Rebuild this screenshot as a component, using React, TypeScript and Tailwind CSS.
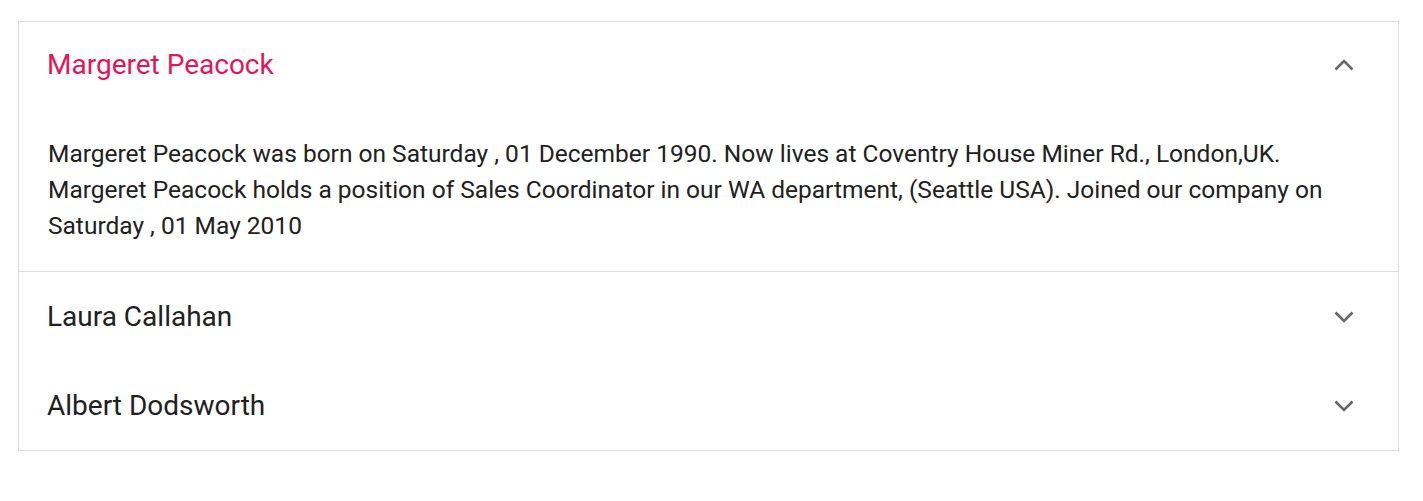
import { useState } from "react";

type Person = { name: string; about: string };

const people: Person[] = [
  {
    name: "Margeret Peacock",
    about:
      "Margeret Peacock was born on Saturday , 01 December 1990. Now lives at Coventry House Miner Rd., London,UK. Margeret Peacock holds a position of Sales Coordinator in our WA department, (Seattle USA). Joined our company on Saturday , 01 May 2010",
  },
  {
    name: "Laura Callahan",
    about:
      "Laura Callahan was born on Tuesday , 06 January 1987. Now lives at 4726 - 11th Ave. N.E., Seattle,USA.",
  },
  {
    name: "Albert Dodsworth",
    about:
      "Albert Dodsworth was born on Monday , 19 July 1982. Now lives at 7 Houndstooth Rd., London,UK.",
  },
];

function Chevron({ up }: { up: boolean }) {
  return (
    <svg width="20" height="12" viewBox="0 0 20 12" fill="none" className="text-[#666666]">
      <polyline
        points={up ? "1.5,10.5 10,2 18.5,10.5" : "1.5,1.5 10,10 18.5,1.5"}
        stroke="currentColor"
        strokeWidth="2.5"
      />
    </svg>
  );
}

export default function App() {
  const [open, setOpen] = useState(0);

  return (
    <div className="bg-white min-h-[501px] pt-[21px] pl-[18px] font-['Roboto',sans-serif]">
      <div className="w-[1381px] border border-[#dcdcdc]">
        {people.map((p, i) => {
          const active = open === i;
          return (
            <div key={p.name} className={i > 0 && open === i - 1 ? "border-t border-[#dcdcdc]" : ""}>
              <button
                onClick={() => setOpen(active ? -1 : i)}
                className={
                  "w-full flex items-center justify-between pl-[28px] pr-[44px] text-left " +
                  (i === 0 ? "h-[86px]" : "h-[89px]")
                }
              >
                <span
                  className={
                    "text-[28px] " + (active ? "text-[#e3165b]" : "text-[#212121]")
                  }
                >
                  {p.name}
                </span>
                <Chevron up={active} />
              </button>
              {active && (
                <div className="pl-[29px] pr-[29px] pt-[28px] pb-[27px] text-[24.5px] leading-[36px] text-[#212121]">
                  {p.about}
                </div>
              )}
            </div>
          );
        })}
      </div>
    </div>
  );
}
